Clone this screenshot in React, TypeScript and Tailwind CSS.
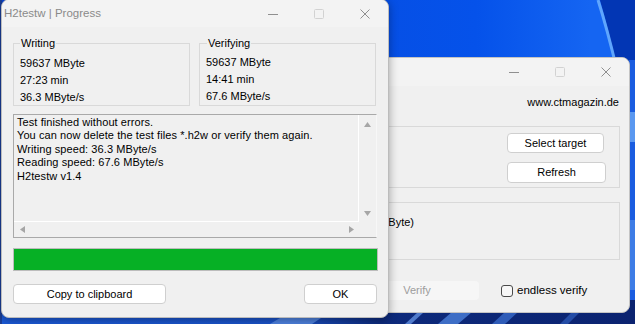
import React from 'react';

function CaptionButtons({ dimMax = true }: { dimMax?: boolean }) {
  return (
    <div className="flex h-full">
      <div className="w-[46px] h-full flex items-center justify-center">
        <svg width="10" height="10" viewBox="0 0 10 10">
          <path d="M0 5.5 H10" stroke="#8f8f8f" strokeWidth="1" />
        </svg>
      </div>
      <div className="w-[46px] h-full flex items-center justify-center">
        <svg width="10" height="10" viewBox="0 0 10 10">
          <rect x="0.5" y="0.5" width="9" height="9" rx="1" fill="none" stroke={dimMax ? '#d2d2d2' : '#8f8f8f'} strokeWidth="1" />
        </svg>
      </div>
      <div className="w-[46px] h-full flex items-center justify-center">
        <svg width="10" height="10" viewBox="0 0 10 10">
          <path d="M0.5 0.5 L9.5 9.5 M9.5 0.5 L0.5 9.5" stroke="#8f8f8f" strokeWidth="1" />
        </svg>
      </div>
    </div>
  );
}

function Arrow({ dir }: { dir: 'up' | 'down' | 'left' | 'right' }) {
  const d = {
    up: 'M0 5 L3.5 0 L7 5 Z',
    down: 'M0 0 L3.5 5 L7 0 Z',
    left: 'M5 0 L0 3.5 L5 7 Z',
    right: 'M0 0 L5 3.5 L0 7 Z',
  }[dir];
  const vertical = dir === 'up' || dir === 'down';
  return (
    <svg width={vertical ? 7 : 5} height={vertical ? 5 : 7} viewBox={vertical ? '0 0 7 5' : '0 0 5 7'}>
      <path d={d} fill="#a6a6a6" />
    </svg>
  );
}

function Wallpaper() {
  return (
    <svg className="absolute inset-0" width="635" height="324" viewBox="0 0 635 324">
      <defs>
        <linearGradient id="sky" x1="0" y1="0" x2="1" y2="0">
          <stop offset="0" stopColor="#0a45d4" />
          <stop offset="0.75" stopColor="#0552ea" />
          <stop offset="0.93" stopColor="#1565f2" />
        </linearGradient>
        <linearGradient id="low" x1="0" y1="0" x2="1" y2="0">
          <stop offset="0" stopColor="#1b5ad8" />
          <stop offset="0.45" stopColor="#1a52c8" />
          <stop offset="0.6" stopColor="#0d2a7c" />
          <stop offset="1" stopColor="#0b2370" />
        </linearGradient>
      </defs>
      <rect width="635" height="324" fill="url(#sky)" />
      <path d="M600 0 C607 25 612 45 618 70 L626 110 L635 150 L635 0 Z" fill="#0236b4" />
      <path d="M598 0 C606 25 611 45 617 70 L625 110" stroke="#6cb2ff" strokeWidth="3" fill="none" opacity="0.85" />
      <rect x="629" y="60" width="6" height="260" fill="#1a5ce0" />
      <rect x="629" y="112" width="6" height="30" fill="#6aa8f4" opacity="0.8" />
      <rect x="629" y="220" width="6" height="70" fill="#4d8ae8" opacity="0.7" />
      <rect x="0" y="300" width="635" height="24" fill="url(#low)" />
      <path d="M270 324 L290 312 L330 312 L312 324 Z" fill="#5b8fe6" opacity="0.8" />
      <path d="M405 324 L418 312 L424 312 L411 324 Z" fill="#6d9ef0" opacity="0.7" />
      <path d="M438 324 L452 312 L472 312 L458 324 Z" fill="#4f86e0" opacity="0.75" />
      <path d="M492 324 L505 312 L518 312 L505 324 Z" fill="#3f74d4" opacity="0.7" />
      <path d="M560 324 L572 312 L580 312 L568 324 Z" fill="#3568c8" opacity="0.6" />
      <rect x="0" y="0" width="2" height="324" fill="#1b3f9a" />
    </svg>
  );
}

function MainWindow() {
  return (
    <div className="absolute left-[150px] top-[57px] w-[480px] h-[256px] rounded-[8px] bg-[#f0f0f0] border border-[#c4c4c4] flex flex-col overflow-hidden">
      <div className="h-[28px] flex justify-end bg-[#f3f3f3]">
        <CaptionButtons />
      </div>
      <div className="flex flex-col px-[9px]">
        <div className="mt-[9px] h-[14px] leading-[14px] text-right pr-[1px]">www.ctmagazin.de</div>
        <div className="mt-[17px] h-[62px] border border-[#d9d9d9] flex justify-end pr-[13px] pt-[6px]">
          <div className="flex flex-col gap-[9px] items-start">
            <button className="w-[97px] h-[20px] rounded-[4px] bg-white border border-[#cfcfcf]">Select target</button>
            <button className="w-[99px] h-[21px] rounded-[4px] bg-white border border-[#cfcfcf]">Refresh</button>
          </div>
        </div>
        <div className="mt-[14px] h-[58px] border border-[#d9d9d9] pt-[12px]">
          <div className="w-[253px] text-right leading-[14px]">D:\ [USB-STICK] (59652 MByte)</div>
        </div>
        <div className="mt-[21px] flex items-center">
          <div className="ml-[195px] w-[124px] h-[19px] rounded-[4px] bg-[#f6f6f6] flex items-center justify-center text-[#9d9d9d]">
            Verify
          </div>
          <div className="ml-[22px] w-[12px] h-[12px] rounded-[3px] border border-[#4a4a4a] bg-[#f7f7f7]" />
          <span className="ml-[4px] text-[11.5px]">endless verify</span>
        </div>
      </div>
    </div>
  );
}

function GroupBox({ label, lines, labelLeft, pad }: { label: string; lines: string[]; labelLeft: string; pad: string }) {
  return (
    <div className={`relative w-[177px] h-[63px] border border-[#d9d9d9] ${pad} pl-[6px]`}>
      <span className={`absolute top-[-8px] ${labelLeft} bg-[#f0f0f0] px-[1px] leading-[14px]`}>{label}</span>
      {lines.map((l) => (
        <div key={l} className="leading-[17px] h-[17px]">{l}</div>
      ))}
    </div>
  );
}

function ProgressDialog() {
  const log = [
    'Test finished without errors.',
    'You can now delete the test files *.h2w or verify them again.',
    'Writing speed: 36.3 MByte/s',
    'Reading speed: 67.6 MByte/s',
    'H2testw v1.4',
  ];
  return (
    <div className="absolute left-[1px] top-[-1px] w-[388px] h-[319px] rounded-[8px] bg-[#f0f0f0] border border-[#bcbcbc] shadow-[0_2px_10px_rgba(0,0,0,0.35)] flex flex-col overflow-hidden">
      <div className="h-[27px] flex items-center justify-between bg-[#f3f3f3]">
        <span className="pl-[2px] text-[11.5px] text-[#8a8a8a]">H2testw | Progress</span>
        <CaptionButtons />
      </div>
      <div className="flex flex-col pl-[11px]">
        <div className="mt-[16px] flex gap-[9px]">
          <GroupBox label="Writing" labelLeft="left-[6px]" pad="pt-[11px]" lines={['59637 MByte', '27:23 min', '36.3 MByte/s']} />
          <GroupBox label="Verifying" labelLeft="left-[7px]" pad="pt-[10px]" lines={['59637 MByte', '14:41 min', '67.6 MByte/s']} />
        </div>
        <div className="mt-[8px] w-[364px] h-[124px] border border-[#a9a9a9] border-r-[#f7f7f7] grid grid-cols-[1fr_17px] grid-rows-[1fr_15px] tracking-[0.08px]">
          <div className="border-r border-b border-white pl-[3px] pt-[1px]">
            {log.map((l) => (
              <div key={l} className="leading-[13.4px] h-[13.4px]">{l}</div>
            ))}
          </div>
          <div className="flex flex-col items-center justify-between pt-[7px] pb-[6px]">
            <Arrow dir="up" />
            <Arrow dir="down" />
          </div>
          <div className="flex items-center justify-between pl-[6px] pr-[5px]">
            <Arrow dir="left" />
            <Arrow dir="right" />
          </div>
          <div />
        </div>
        <div className="mt-[10px] w-[365px] h-[23px] border border-[#bcbcbc] bg-[#06b025]" />
        <div className="mt-[13px] w-[364px] flex justify-between">
          <button className="w-[153px] h-[20px] rounded-[4px] bg-white border border-[#cfcfcf]">Copy to clipboard</button>
          <button className="w-[73px] h-[20px] rounded-[4px] bg-white border border-[#cfcfcf]">OK</button>
        </div>
      </div>
    </div>
  );
}

export default function App() {
  return (
    <div className="relative w-[635px] h-[324px] overflow-hidden font-['Liberation_Sans',Arial,sans-serif] text-[11px] text-black">
      <Wallpaper />
      <MainWindow />
      <ProgressDialog />
    </div>
  );
}
